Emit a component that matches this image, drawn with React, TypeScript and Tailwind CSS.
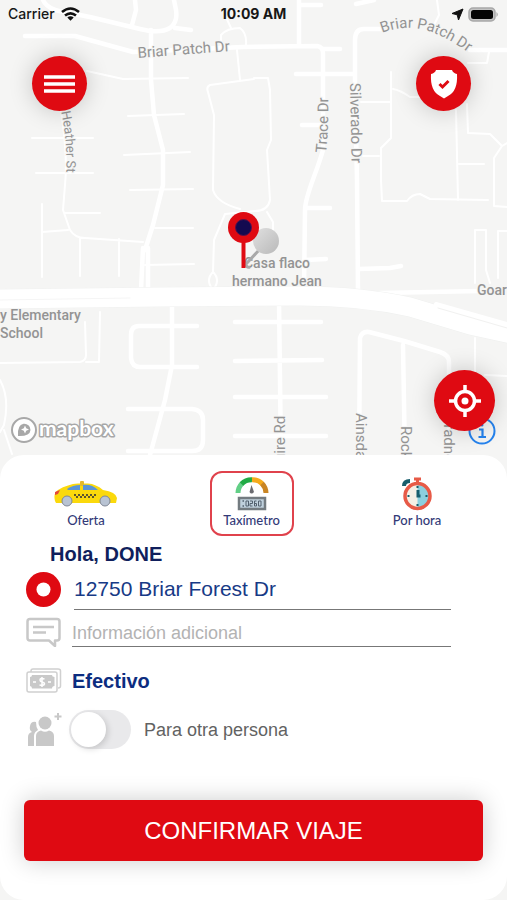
import { useState } from 'react'

type Service = 'oferta' | 'taximetro' | 'hora'

const WIDE_ROADS = [
  'M43 0C48 12 66 12 90 17L140 29Q160 34 170 28Q178 22 176 10L174 0',
  'M175 28L191 30',
  'M135 0L136 10L132 25',
  'M25 36H75L133 52L243 47L317 46Q323 47 323 53V150C316 175 305 195 305 210L304 290',
  'M151 30V80L154 115L163 150V185L153 225L145 250',
  'M143 248L141 290M148 248V290',
  'M299 0V45M299 5H321M356 4L374 0',
  'M323 49H340M296 74H355M302 125H320M308 208H330',
  'M382 29H364Q355 29 355 40V83L357 180L358 292',
  'M470 50H507M359 269L390 268L401 266M305 260L326 259M380 293L480 291',
  'M172 305V365L165 400L150 455',
  'M197 326H139Q131 326 131 335V358Q132 367 140 367H197',
  'M128 409H192Q203 410 203 420V440Q203 451 192 451H128',
  'M279 300L281 460',
  'M235 322H321M235 361L322 360M235 397H326M235 436H326',
  'M359 460L360 338Q362 331 369 332L404 341L440 352Q449 355 449 362V460',
  'M403 345L405 460',
]

const THIN_ROADS = [
  'M87 71L123 79L188 78M128 116L184 114M124 155L190 152M130 190L193 189M155 228H193M145 265L194 264',
  'M32 138H93M36 173H93M60 105C66 140 67 165 65 185L63 210L70 230Q75 238 85 238L143 242',
  'M64 213H100M42 204V277M42 232L68 230M80 238V276M119 239V276',
  'M254 79L210 85Q206 87 208 92L214 115L213 190Q217 203 240 209',
  'M254 78H268L270 90L271 140L267 150L270 200Q268 211 255 211L225 214L214 240L213 272',
  'M213 272Q205 280 213 290Q221 280 213 272M267 212L273 222V240',
  'M237 50L240 80M221 45V35Q227 28 240 28Q247 33 246 45M225 15L231 28',
  'M437 0L439 15L434 25M468 63H487L489 52',
  'M391 72V138L381 148V180L382 201H407Q412 194 420 194L430 199L488 200',
  'M393 89Q400 90 410 97H420M361 102H391M363 156H379M456 110L458 200M459 164H484',
  'M467 104L468 133L490 134L502 146L494 158V206L507 207M502 146L507 143',
  'M475 283V230H486V270L490 283M498 278V231H507',
  'M475 338V375M485 375L507 376',
  'M0 363L80 362Q86 361 86 355L85 322M86 362H99L100 312',
  'M0 380Q10 398 4 425L0 432M4 430L12 454',
]

function CityMap() {
  return (
    <svg
      className="absolute inset-0 size-full"
      viewBox="0 0 507 900"
      preserveAspectRatio="xMidYMin slice"
      fill="none"
      role="img"
      aria-label="Mapa"
    >
      <g stroke="#fff" strokeLinecap="round" strokeLinejoin="round">
        <path d={THIN_ROADS.join('')} strokeWidth="2" />
        <path d={WIDE_ROADS.join('')} strokeWidth="4.5" />
        <path d="M-10 299L160 297L300 296Q360 296 410 307L470 325L520 336" strokeWidth="20" stroke="#f0f1f0" />
        <path d="M-10 299L160 297L300 296Q360 296 410 307L470 325L520 336" strokeWidth="19" />
        <path d="M436 304L507 324" strokeWidth="4" />
        <path d="M438 308L507 328" strokeWidth="1" stroke="#f1f1f0" />
        <path d="M0 300L130 298" strokeWidth="1" stroke="#f5f5f5" />
      </g>

      <defs>
        <path id="heather" d="M58 99Q70 142 65 190" />
        <path id="patch-west" d="M138 58Q190 54 245 50" />
        <path id="patch-east" d="M382 33C415 20 442 32 478 60" />
        <path id="trace" d="M326 153Q329 128 328 85" />
        <path id="silverado" d="M350 83L352 180" />
        <linearGradient id="ball" x1="0" y1="0" x2="1" y2="1">
          <stop stopColor="#e0e0e0" />
          <stop offset="1" stopColor="#b9b9b9" />
        </linearGradient>
      </defs>

      <g
        fill="#939393"
        stroke="#f5f5f4"
        strokeWidth="2"
        paintOrder="stroke"
        fontSize="15"
        style={{ fontFamily: 'Roboto, sans-serif' }}
      >
        <text fontSize="13"><textPath href="#heather">is Heather St</textPath></text>
        <text><textPath href="#patch-west">Briar Patch Dr</textPath></text>
        <text><textPath href="#patch-east">Briar Patch Dr</textPath></text>
        <text><textPath href="#trace">Trace Dr</textPath></text>
        <text><textPath href="#silverado">Silverado Dr</textPath></text>
        <text transform="translate(285 462) rotate(-90)">uire Rd</text>
        <text transform="translate(356 413) rotate(90)">Ainsdale</text>
        <text transform="translate(401 426) rotate(90)">Rock</text>
        <text transform="translate(444 415) rotate(90)">Bradney</text>
        <g fontSize="14" fontWeight="500">
          <text x="0" y="320">y Elementary</text>
          <text x="0" y="338">School</text>
          <text x="477" y="295">Goar</text>
          <text x="277" y="268" textAnchor="middle">Casa flaco</text>
          <text x="277" y="286" textAnchor="middle">hermano Jean</text>
        </g>
      </g>

      <path d="M260 249L246 264Q246 268 250 267" stroke="#a9a9a9" strokeWidth="3" />
      <circle cx="266" cy="241" r="13" fill="url(#ball)" />
      <path d="M243.500 238V268" stroke="#df0a12" strokeWidth="4" />
      <circle cx="243.500" cy="227.500" r="15.500" fill="#df0a12" />
      <circle cx="243.500" cy="227.500" r="8" fill="#140a50" stroke="#5b1048" strokeWidth="1" />
    </svg>
  )
}

function StatusBar() {
  return (
    <div className="grid h-7 grid-cols-3 items-center px-2 font-[Inter,sans-serif] text-sm text-neutral-900">
      <div className="flex items-center gap-1.5 font-medium">
        Carrier
        <svg width="19" height="14" viewBox="0 0 19 14" fill="none" stroke="#111" strokeWidth="2.6">
          <path d="M1 5Q9.500 -2 18 5" />
          <path d="M4 8.600Q9.500 4 15 8.600" />
          <path d="M6.300 10.500Q9.500 8 12.700 10.500L9.500 13.800Z" fill="#111" stroke="none" />
        </svg>
      </div>
      <div className="text-center font-bold">10:09 AM</div>
      <div className="flex items-center justify-end gap-1">
        <svg width="13" height="13" viewBox="0 0 13 13">
          <path d="M12 1L7.500 12L6.200 6.800L1 5.500Z" fill="#111" stroke="#111" strokeLinejoin="round" />
        </svg>
        <svg width="31" height="15" viewBox="0 0 31 15">
          <rect x="1" y="1" width="26" height="13" rx="4" fill="#c4c4c4" stroke="#a8a8a8" strokeWidth="1.500" />
          <rect x="3" y="3" width="22" height="9" rx="2.500" fill="#050505" />
          <path d="M28.500 5Q31 7.500 28.500 10Z" fill="#a3a3a3" />
        </svg>
      </div>
    </div>
  )
}

function MapboxLogo() {
  return (
    <svg width="108" height="30" viewBox="0 0 108 30" role="img" aria-label="Mapbox">
      <circle cx="14" cy="15" r="12" fill="#fff" stroke="#a8a8a8" strokeWidth="2" />
      <path d="M8 21Q7 10 13.500 8.700A6.200 6.200 0 0 1 20.500 15Q20 21.500 8 21Z" fill="#a8a8a8" />
      <path d="M15 10.500L16.200 13.300L19 14.500L16.200 15.700L15 18.500L13.800 15.700L11 14.500L13.800 13.300Z" fill="#fff" />
      <text
        x="29"
        y="21"
        fontSize="21"
        fontWeight="700"
        fill="#fff"
        stroke="#a8a8a8"
        strokeWidth="3"
        strokeLinejoin="round"
        paintOrder="stroke"
        style={{ fontFamily: 'Lato, sans-serif' }}
      >
        mapbox
      </text>
    </svg>
  )
}

function TaxiIcon() {
  return (
    <svg width="64" height="26" viewBox="0 0 64 26">
      <path d="M1 20Q-1 12 4 9Q14 3 24 2.500H34Q42 3 49 9Q62 11 63 17L62 22H2Z" fill="#fbd90c" />
      <rect x="26" y="0" width="4" height="5" rx="1" fill="#e5b92b" />
      <path d="M13 8Q19 4 26 4V9H14Z" fill="#5b95d6" />
      <path d="M29 4Q38 3 44 9H29Z" fill="#5b95d6" />
      <path d="M1 11L6 9L4 13L1 14Z" fill="#e5483a" />
      <path d="M20 14H42" stroke="#5c5430" strokeWidth="2" strokeDasharray="2 2" />
      <path d="M22 16H40" stroke="#5c5430" strokeWidth="2" strokeDasharray="2 2" />
      <circle cx="13" cy="20" r="5" fill="#b8c3d3" stroke="#7f8796" />
      <circle cx="51" cy="20" r="5" fill="#b8c3d3" stroke="#7f8796" />
    </svg>
  )
}

function MeterIcon() {
  return (
    <svg width="34" height="34" viewBox="0 0 34 34" fill="none">
      <path d="M3 16A14 14 0 0 1 7 6.500" stroke="#62cf86" strokeWidth="5" />
      <path d="M6.500 7A14 14 0 0 1 17 2.800" stroke="#20ab45" strokeWidth="5" />
      <path d="M17 2.800A14 14 0 0 1 27.500 7" stroke="#f5ab1c" strokeWidth="5" />
      <path d="M27 6.500A14 14 0 0 1 31 16" stroke="#c98524" strokeWidth="5" />
      <path d="M16.500 8L19 15Q16.500 18 14.500 15Z" fill="#6b6b70" />
      <rect x="4" y="21" width="26" height="11" fill="#bfd0dc" stroke="#737b80" strokeWidth="2.500" />
      <path d="M7.500 24H9M7.500 29H9" stroke="#52606e" strokeWidth="1.500" />
      <path
        d="M11 24H13.500V29H11ZM15 24H17.500V26.500H15V29H17.500M21.500 24H19.500V29H21.500V26.500H19.500M23.500 24H26V29H23.500Z"
        stroke="#52606e"
      />
    </svg>
  )
}

function StopwatchIcon() {
  return (
    <svg width="30" height="34" viewBox="0 0 30 34" fill="none">
      <path d="M2 9Q2 4 8 4" stroke="#175d6c" strokeWidth="4" />
      <path d="M12 2H19M15.500 2V6" stroke="#e75a47" strokeWidth="3" />
      <circle cx="15.500" cy="19" r="12" fill="#f5efe5" />
      <path d="M15.500 7A12 12 0 0 1 15.500 31Z" fill="#8bd0df" />
      <circle cx="15.500" cy="19" r="12.500" stroke="#e75a47" strokeWidth="3.500" />
      <path d="M15.500 9V11M15.500 27V29M5.500 19H7.500M23.500 19H25.500" stroke="#175d6c" strokeWidth="2" />
      <path d="M16 13V19H18.500" stroke="#175d6c" strokeWidth="3" />
    </svg>
  )
}

const SERVICES = [
  { id: 'oferta' as Service, label: 'Oferta', icon: <TaxiIcon /> },
  { id: 'taximetro' as Service, label: 'Taxímetro', icon: <MeterIcon /> },
  { id: 'hora' as Service, label: 'Por hora', icon: <StopwatchIcon /> },
]

export default function App() {
  const [service, setService] = useState<Service>('taximetro')
  const [address, setAddress] = useState('12750 Briar Forest Dr')
  const [info, setInfo] = useState('')
  const [other, setOther] = useState(false)

  return (
    <main className="relative flex min-h-screen flex-col overflow-hidden bg-[#f5f5f4] font-['Liberation_Sans',sans-serif]">
      <CityMap />

      <section className="relative flex flex-1 flex-col">
        <StatusBar />
        <div className="flex justify-between pt-7 pr-9 pl-8">
          <button
            aria-label="Menú"
            className="flex size-[55px] items-center justify-center rounded-full bg-[#df0a12] shadow-[0_0_24px_rgba(0,0,0,0.2)]"
          >
            <svg width="32" height="20" viewBox="0 0 32 20" stroke="#fff" strokeWidth="3.500">
              <path d="M0 3H31M0 10H31M0 17H31" />
            </svg>
          </button>
          <button
            aria-label="Seguridad"
            className="flex size-[55px] items-center justify-center rounded-full bg-[#df0a12] shadow-[0_0_24px_rgba(0,0,0,0.2)]"
          >
            <svg width="28" height="30" viewBox="0 0 28 30">
              <path d="M6 1H22Q23 4 27 5Q28 22 18 27L14 29.500L10 27Q0 22 1 5Q5 4 6 1Z" fill="#fff" />
              <path d="M9.500 15L12.500 18L18.500 12" fill="none" stroke="#df0a12" strokeWidth="3" />
            </svg>
          </button>
        </div>

        <div className="mt-auto flex items-end justify-between pr-3 pb-2.5 pl-2.5">
          <MapboxLogo />
          <div className="relative pb-3.5">
            <button
              aria-label="Información del mapa"
              className="absolute -right-px bottom-0 flex items-end justify-center"
            >
              <svg width="28" height="28" viewBox="0 0 28 28" fill="none" stroke="#2583ee">
                <circle cx="14" cy="14" r="12.500" strokeWidth="2" />
                <path d="M11 12.500H14.500V20M10.500 20H18" strokeWidth="2.200" />
                <circle cx="14" cy="8" r="1.500" fill="#2583ee" stroke="none" />
              </svg>
            </button>
            <button
              aria-label="Mi ubicación"
              className="relative flex size-[61px] items-center justify-center rounded-full bg-[#df0a12] shadow-[0_0_24px_rgba(0,0,0,0.2)]"
            >
              <svg width="34" height="34" viewBox="0 0 34 34" fill="none" stroke="#fff" strokeWidth="3.500">
                <circle cx="17" cy="17" r="9.500" />
                <circle cx="17" cy="17" r="3.500" fill="#fff" stroke="none" />
                <path d="M17 1V8M17 26V33M1 17H8M26 17H33" />
              </svg>
            </button>
          </div>
        </div>
      </section>

      <section className="relative rounded-3xl bg-white px-6 pt-4 pb-[39px]">
        <div className="flex justify-between pr-6 pl-5">
          {SERVICES.map(s => (
            <button
              key={s.id}
              aria-pressed={service === s.id}
              onClick={() => setService(s.id)}
              className={`flex h-[65px] w-[84px] flex-col items-center justify-end rounded-xl border-2 pb-1.5 font-[Lato,sans-serif] text-[13px] leading-4 font-medium text-[#333a78] ${service === s.id ? 'border-[#e0424c]' : 'border-transparent'}`}
            >
              <span className="flex h-[36px] items-center">{s.icon}</span>
              {s.label}
            </button>
          ))}
        </div>

        <h1 className="mt-1 ml-[26px] text-xl leading-7 font-bold text-[#101f5c]">Hola, DONE</h1>

        <div className="flex h-[42px] items-center pr-2 sm:pr-8">
          <svg className="ml-0.5 shrink-0" width="35" height="35" viewBox="0 0 35 35">
            <circle cx="17.500" cy="17.500" r="17.500" fill="#df0a12" />
            <circle cx="17.500" cy="17.500" r="7" fill="#fff" />
          </svg>
          <input
            aria-label="Dirección"
            value={address}
            onChange={e => setAddress(e.target.value)}
            className="mr-6 ml-[13px] h-full min-w-0 flex-1 border-b border-[#777] text-[21px] text-[#173a86] outline-none"
          />
        </div>

        <div className="flex h-[37px] items-end pr-2 sm:pr-8">
          <svg className="ml-0.5 shrink-0" width="36" height="30" viewBox="0 0 36 30" fill="none" stroke="#c8c8c8" strokeWidth="2.500" strokeLinejoin="round">
            <path d="M4 2H31Q33.500 2 33.500 4.500V21Q33.500 23.500 31 23.500H29V29L23 23.500H4Q1.500 23.500 1.500 21V4.500Q1.500 2 4 2Z" />
            <path d="M7 10H28M7 15.500H20" />
          </svg>
          <input
            aria-label="Información adicional"
            placeholder="Información adicional"
            value={info}
            onChange={e => setInfo(e.target.value)}
            className="mr-6 ml-[10px] h-[27px] min-w-0 flex-1 border-b border-[#777] text-lg text-[#555] outline-none placeholder:text-[#b3b3b3]"
          />
        </div>

        <button className="mt-3.5 flex h-10 items-center gap-[10px] pl-0.5 text-xl font-bold text-[#0c2d80]">
          <svg width="36" height="26" viewBox="0 0 36 26" fill="none">
            <path d="M5 4V3Q5 1 7 1H32Q34.500 1 34.500 3V18Q34.500 20 32 20" stroke="#d0d0d0" strokeWidth="1.500" />
            <rect x="1" y="4" width="30" height="20" rx="2" stroke="#d0d0d0" strokeWidth="1.500" />
            <path d="M6 7H26Q26 9 28.500 9V18Q26 18 26 20.500H6Q6 18 4 18V9Q6 9 6 7Z" fill="#c9c9c9" />
            <path d="M18.500 11Q14 9.500 14 12Q14 13.500 16 14Q18.500 14.500 18.500 16Q18 18 13.500 17M16 9V19M7 14H10M22 14H25" stroke="#fff" strokeWidth="1.500" />
          </svg>
          Efectivo
        </button>

        <div className="mt-2 flex h-[41px] items-center">
          <svg className="ml-1 shrink-0" width="34" height="36" viewBox="0 0 34 36" fill="#c8c8c8">
            <path d="M8 10Q3 9 2 14Q1 18 4 20Q0 21 0 25V34H6V24Q6 20 10 18Q8 15 8 10Z" />
            <circle cx="17" cy="11" r="6.500" />
            <path d="M8 34V24Q8 19.500 13 18.500Q17 21 21 18.500Q26 19.500 26 24V34Z" />
            <path d="M30 1V8M26.500 4.500H33.500" stroke="#c8c8c8" strokeWidth="2" />
          </svg>
          <input
            id="other-person"
            type="checkbox"
            checked={other}
            onChange={e => setOther(e.target.checked)}
            className="ml-[7px] h-[39px] w-[62px] shrink-0 appearance-none rounded-full bg-[#e9e9eb] p-0.5 before:block before:size-[35px] before:rounded-full before:bg-white before:shadow-[2px_2px_6px_rgba(0,0,0,0.15)] checked:bg-[#df0a12] checked:before:ml-[23px]"
          />
          <label htmlFor="other-person" className="ml-[13px] text-lg text-[#626262]">
            Para otra persona
          </label>
        </div>

        <button className="mt-[50px] h-[61px] w-full rounded-md bg-[#df0a12] text-2xl text-white shadow-[0_0_24px_rgba(0,0,0,0.2)]">
          CONFIRMAR VIAJE
        </button>
      </section>
    </main>
  )
}
